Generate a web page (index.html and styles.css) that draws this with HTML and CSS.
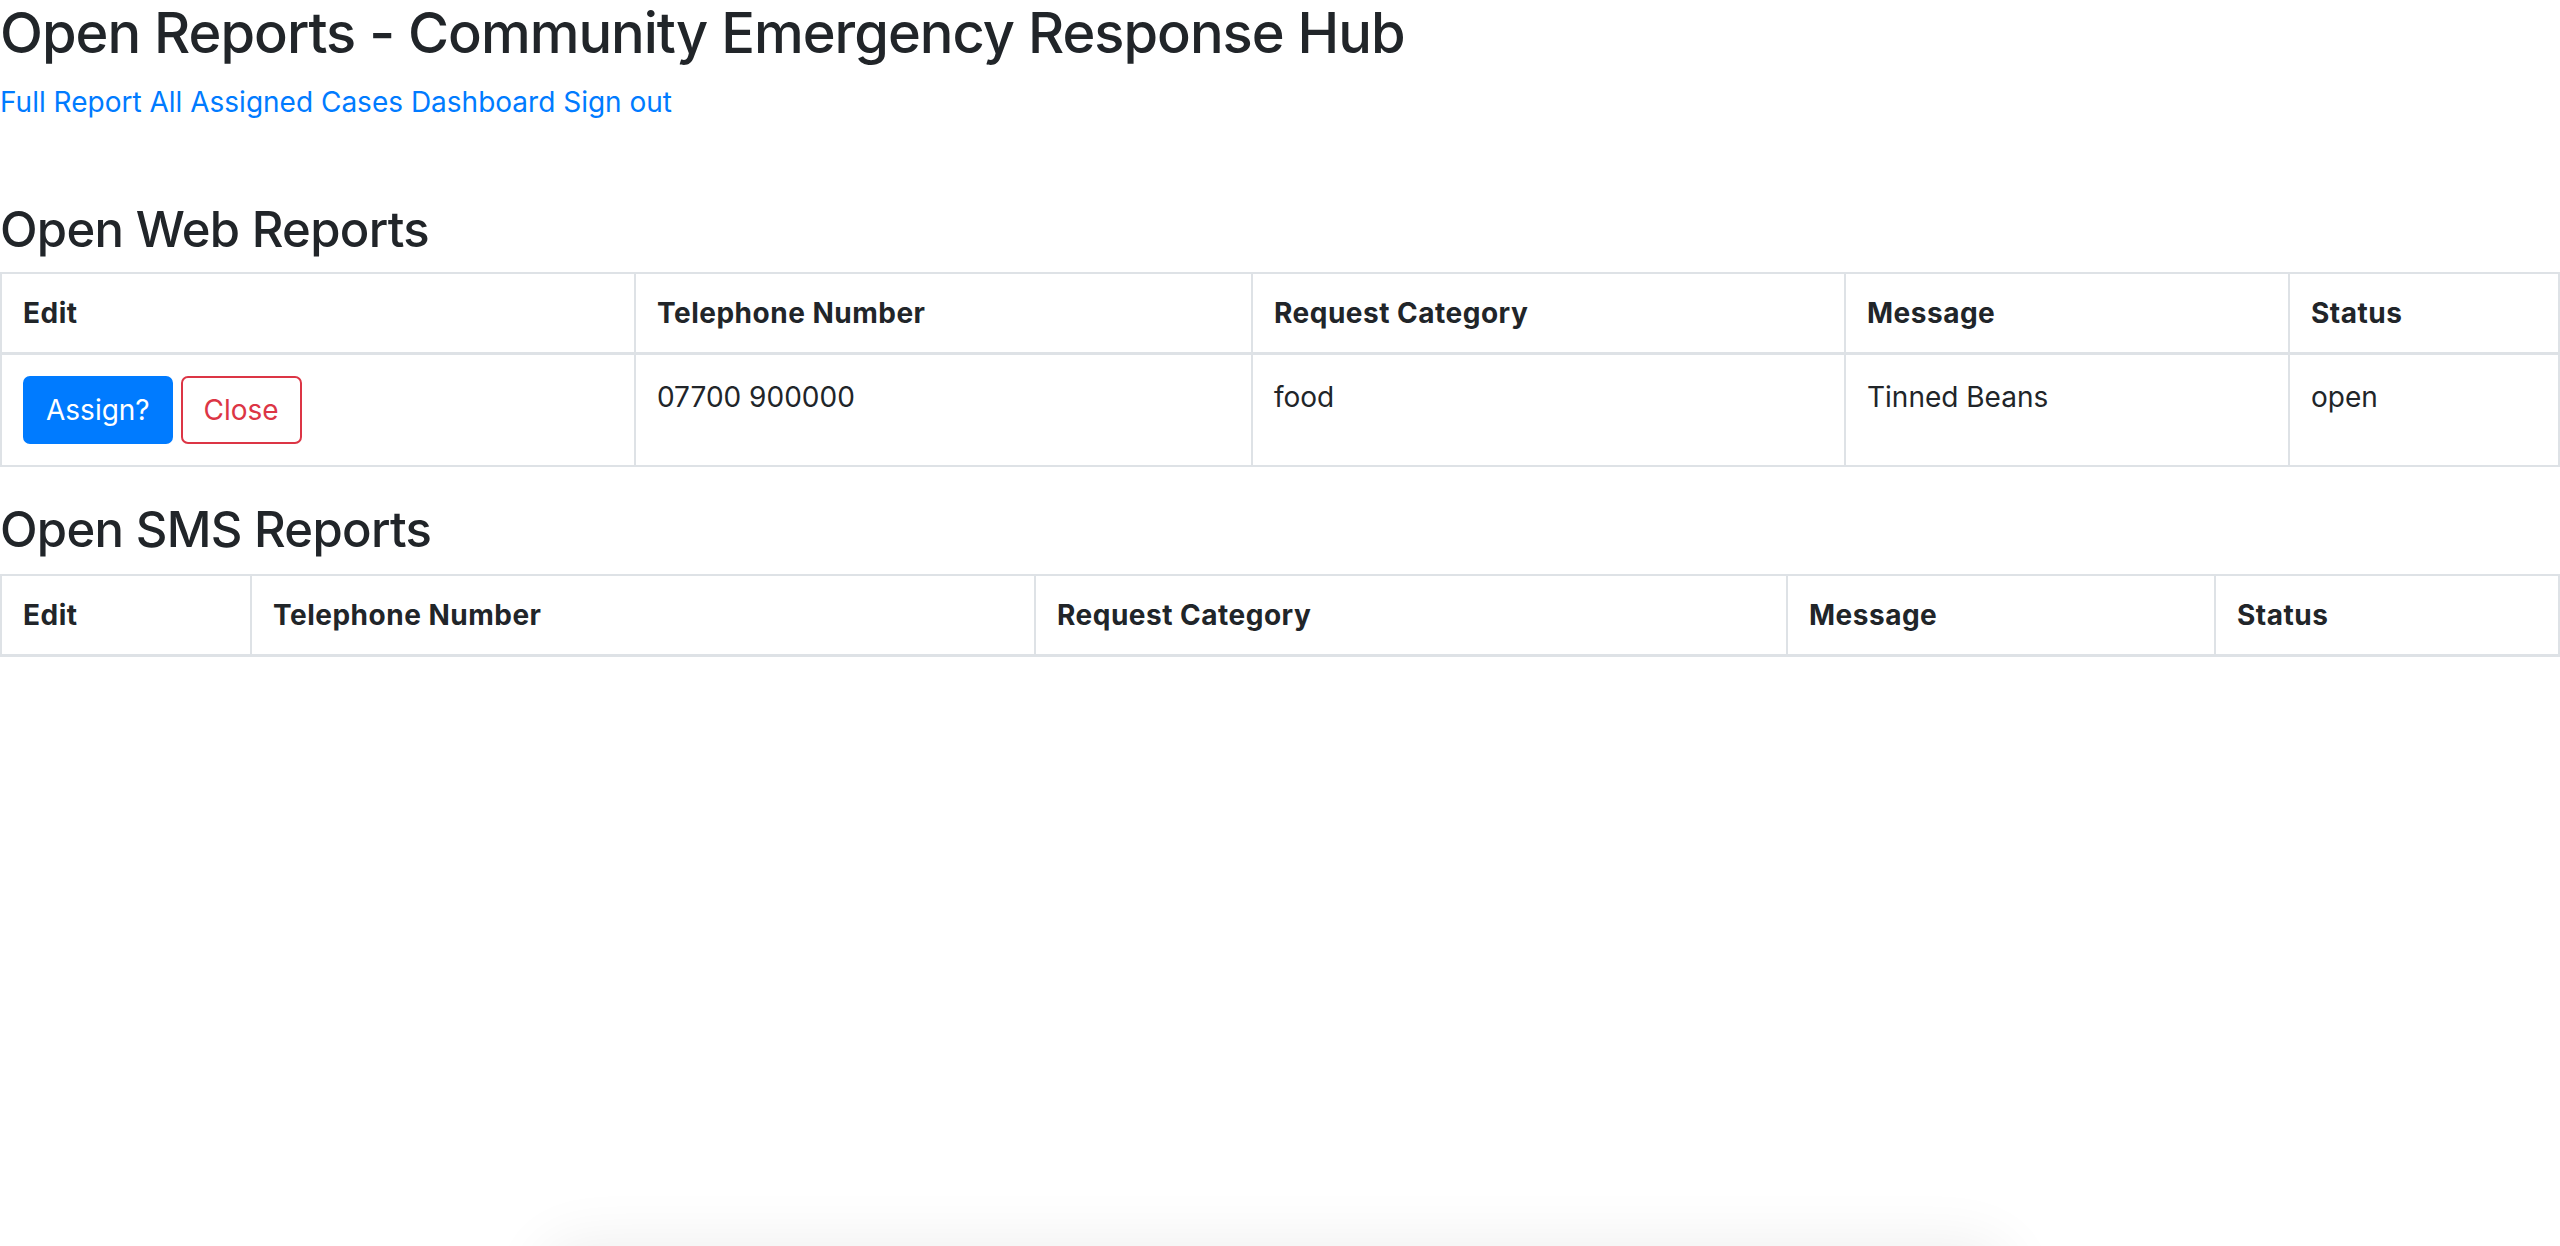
FILE: index.html
```html
<!DOCTYPE html>
<html lang="en">
<head>
<meta charset="utf-8">
<title>Open Reports - Community Emergency Response Hub</title>
<link rel="stylesheet" href="styles.css">
</head>
<body>
<h2 class="page-title">Open Reports - Community Emergency Response Hub</h2>
<p class="nav"><a href="#">Full Report</a> <a href="#">All Assigned Cases</a> <a href="#">Dashboard</a> <a href="#">Sign out</a></p>

<h3 class="section-title">Open Web Reports</h3>
<table class="report-table web">
  <colgroup>
    <col class="c1"><col class="c2"><col class="c3"><col class="c4"><col class="c5">
  </colgroup>
  <thead>
    <tr><th>Edit</th><th>Telephone Number</th><th>Request Category</th><th>Message</th><th>Status</th></tr>
  </thead>
  <tbody>
    <tr>
      <td><button class="btn btn-primary">Assign?</button> <button class="btn btn-outline-danger">Close</button></td>
      <td>07700 900000</td>
      <td>food</td>
      <td>Tinned Beans</td>
      <td>open</td>
    </tr>
  </tbody>
</table>

<h3 class="section-title sms-title">Open SMS Reports</h3>
<table class="report-table sms">
  <colgroup>
    <col class="c1"><col class="c2"><col class="c3"><col class="c4"><col class="c5">
  </colgroup>
  <thead>
    <tr><th>Edit</th><th>Telephone Number</th><th>Request Category</th><th>Message</th><th>Status</th></tr>
  </thead>
  <tbody></tbody>
</table>

<div class="bottom-shadow"></div>
</body>
</html>
```

FILE: styles.css
```css
html, body {
  background: #ffffff;
}
body {
  margin: 0;
  font-family: Inter, "Noto Sans", "Liberation Sans", sans-serif;
  font-size: 28px;
  line-height: 42px;
  color: #212529;
  overflow: hidden;
}

.page-title {
  margin: 0 0 14px 0;
  font-size: 56px;
  line-height: 67px;
  font-weight: 500;
  letter-spacing: -1px;
}

.nav {
  margin: 0 0 77px 0;
}
.nav a {
  color: #007bff;
  text-decoration: none;
}

.section-title {
  margin: 0 0 13px 0;
  font-size: 49px;
  line-height: 59px;
  font-weight: 500;
  letter-spacing: -0.7px;
}
.sms-title {
  margin-bottom: 15px;
}

.report-table {
  width: 100%;
  border-collapse: collapse;
  table-layout: fixed;
  margin-bottom: 33px;
  border: 2px solid #dee2e6;
}
.report-table th,
.report-table td {
  border: 2px solid #dee2e6;
  text-align: left;
  vertical-align: top;
  padding: 21px 21px;
}
.report-table th {
  padding-top: 18px;
  padding-bottom: 18px;
  font-weight: 700;
  letter-spacing: 0.5px;
  border-bottom: 3px solid #dee2e6;
}

.web .c1 { width: 634px; }
.web .c2 { width: 617px; }
.web .c3 { width: 593px; }
.web .c4 { width: 444px; }
.web .c5 { width: auto; }

.sms .c1 { width: 250px; }
.sms .c2 { width: 784px; }
.sms .c3 { width: 752px; }
.sms .c4 { width: 428px; }
.sms .c5 { width: auto; }

.btn {
  display: inline-block;
  font-family: inherit;
  font-size: 28px;
  line-height: 42px;
  font-weight: 400;
  padding: 11px 21px;
  border: 2px solid transparent;
  border-radius: 7px;
  margin: 0;
  vertical-align: middle;
  cursor: pointer;
}
.btn-primary {
  background: #007bff;
  border-color: #007bff;
  color: #ffffff;
}
.btn-outline-danger {
  background: #ffffff;
  border-color: #dc3545;
  color: #dc3545;
}

.bottom-shadow {
  position: fixed;
  left: 560px;
  width: 1430px;
  top: 1262px;
  height: 120px;
  border-radius: 20px;
  background: #ffffff;
  box-shadow: 0 0 60px 20px rgba(0, 0, 0, 0.07);
}
```
